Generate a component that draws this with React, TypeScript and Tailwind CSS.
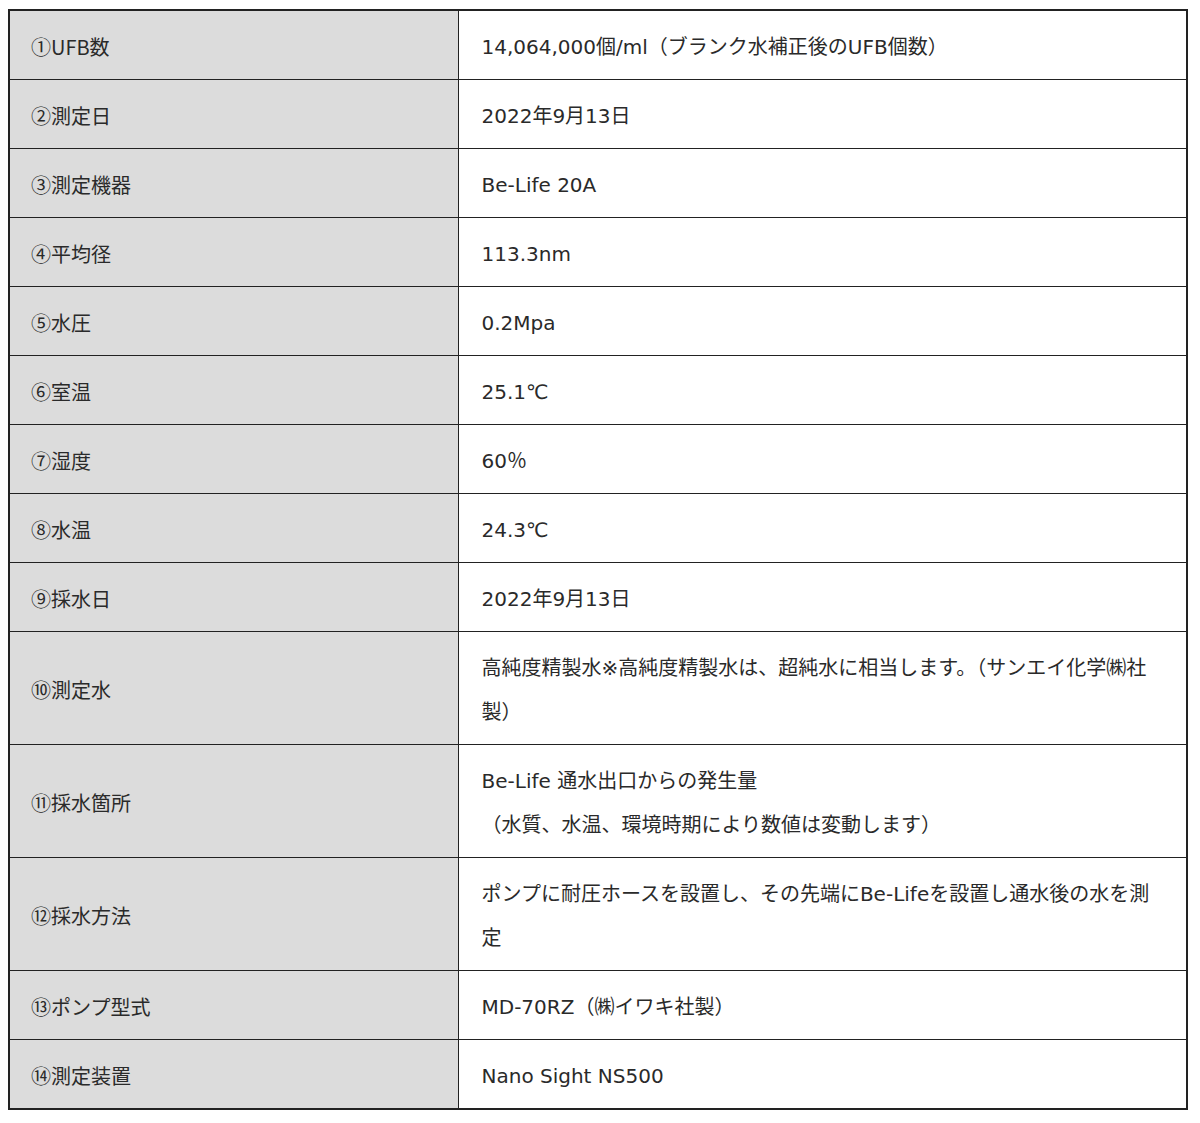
const rows: [string, string][] = [
  ["①UFB数", "14,064,000個/ml（ブランク水補正後のUFB個数）"],
  ["②測定日", "2022年9月13日"],
  ["③測定機器", "Be-Life 20A"],
  ["④平均径", "113.3nm"],
  ["⑤水圧", "0.2Mpa"],
  ["⑥室温", "25.1℃"],
  ["⑦湿度", "60％"],
  ["⑧水温", "24.3℃"],
  ["⑨採水日", "2022年9月13日"],
  ["⑩測定水", "高純度精製水※高純度精製水は、超純水に相当します。（サンエイ化学㈱社\n製）"],
  ["⑪採水箇所", "Be-Life 通水出口からの発生量\n（水質、水温、環境時期により数値は変動します）"],
  ["⑫採水方法", "ポンプに耐圧ホースを設置し、その先端にBe-Lifeを設置し通水後の水を測\n定"],
  ["⑬ポンプ型式", "MD-70RZ（㈱イワキ社製）"],
  ["⑭測定装置", "Nano Sight NS500"],
];

const App = () => {
  return (
    <main className="min-h-[1123px] bg-white pl-[8px] pt-[9px]">
      <table
        className="w-[1180px] table-fixed border-collapse border-2 border-[#222] text-[20px] leading-[44px] text-[#2a2a2a]"
        style={{ fontFamily: '"DejaVu Sans", "Noto Sans CJK JP", sans-serif' }}
      >
        <colgroup>
          <col className="w-[449px]" />
          <col />
        </colgroup>
        <tbody>
          {rows.map(([label, value]) => (
            <tr key={label}>
              <td
                className="border border-[#222] bg-[#dcdcdc] pb-[10px] pl-[21px] pt-[14px] align-middle"
                style={{ fontFamily: '"Noto Sans CJK JP", sans-serif' }}
              >
                {label}
              </td>
              <td className="whitespace-pre-line border border-[#222] bg-white pb-[10px] pl-[23px] pr-[10px] pt-[14px] align-middle">
                {value}
              </td>
            </tr>
          ))}
        </tbody>
      </table>
    </main>
  );
};

export default App;
